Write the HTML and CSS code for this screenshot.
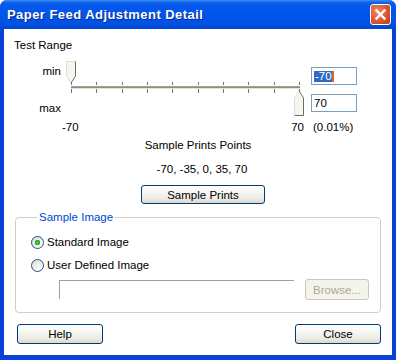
FILE: index.html
```html
<!DOCTYPE html>
<html>
<head>
  <title>Paper Feed Adjustment Detail</title>
  <link rel="stylesheet" href="styles.css">
</head>
<body>
  <div class="window">
    <div class="titlebar">
      <span class="title">Paper Feed Adjustment Detail</span>
      <span class="close-x">
        <svg width="19" height="19" viewBox="0 0 19 19">
          <path d="M5.5 5.5L13.5 13.5M13.5 5.5L5.5 13.5" stroke="#fff" stroke-width="2.4" stroke-linecap="square"/>
        </svg>
      </span>
    </div>

    <div class="content">
      <div class="section-label">Test Range</div>

      <div class="range">
        <div class="range-labels">
          <span class="lbl-min">min</span>
          <span class="lbl-max">max</span>
        </div>

        <div class="slider">
          <div class="ticks">
            <span></span><span></span><span></span><span></span><span></span>
            <span></span><span></span><span></span><span></span><span></span>
          </div>
          <div class="track"></div>
          <div class="ticks ticks-bottom">
            <span></span><span></span><span></span><span></span><span></span>
            <span></span><span></span><span></span><span></span><span></span>
          </div>
          <div class="slider-values"><span>-70</span><span>70</span></div>

          <!-- thumbs sit on top of the track -->
          <svg class="thumb thumb-min" width="11" height="23" viewBox="0 0 11 23">
            <polygon points="1,1 9,1 9,15 5,21 1,15" fill="#f6f5ef"/>
            <polyline points="5,21.5 0.5,15 0.5,0.5 9.5,0.5" fill="none" stroke="#dfdccf"/>
            <polyline points="9.5,0.5 9.5,15 5,22" fill="none" stroke="#6f6d62"/>
          </svg>
          <svg class="thumb thumb-max" width="11" height="27" viewBox="0 0 11 27">
            <polygon points="5,1 9,8 9,25 1,25 1,8" fill="#f6f5ef"/>
            <polyline points="0.5,25 0.5,8 5,0.5" fill="none" stroke="#dfdccf"/>
            <polyline points="5,0.5 9.5,8 9.5,25.5 0.5,25.5" fill="none" stroke="#6f6d62"/>
          </svg>
        </div>

        <div class="range-inputs">
          <div class="field"><span class="selected">-70</span><span class="caret"></span></div>
          <div class="field field-max">70</div>
          <div class="unit">(0.01%)</div>
        </div>
      </div>

      <div class="points">
        <div class="points-title">Sample Prints Points</div>
        <div class="points-values">-70, -35, 0, 35, 70</div>
        <button class="btn btn-sample">Sample Prints</button>
      </div>

      <fieldset class="group">
        <legend>Sample Image</legend>
        <div class="radio-row"><span class="radio checked"></span>Standard Image</div>
        <div class="radio-row radio-row-2"><span class="radio"></span>User Defined Image</div>
        <div class="file-row">
          <div class="file-path"></div>
          <button class="btn btn-disabled">Browse...</button>
        </div>
      </fieldset>

      <div class="footer">
        <button class="btn">Help</button>
        <button class="btn">Close</button>
      </div>
    </div>
  </div>
</body>
</html>
```

FILE: styles.css
```css
body {
  margin: 0;
  background: #fff;
  font-family: "Liberation Sans", Arial, sans-serif;
  font-size: 11.5px;
  color: #000;
}

.window {
  width: 396px;
  height: 360px;
  box-sizing: border-box;
  background: #0842d6;
  border-radius: 7px 7px 0 0;
  padding: 0 4px 5px 4px;
  display: flex;
  flex-direction: column;
}

.titlebar {
  height: 29px;
  margin: 0 -4px;
  padding: 0 5px 0 7px;
  border-radius: 7px 7px 0 0;
  background: linear-gradient(#3d8cf7 0, #0a5ee8 3px, #0558ee 6px, #0055ea 50%, #0052e3 80%, #0146cf 100%);
  display: flex;
  align-items: center;
  justify-content: space-between;
}

.title {
  color: #fff;
  font-weight: bold;
  font-size: 13px;
  letter-spacing: 0.45px;
  text-shadow: 1px 1px #0c2a8f;
}

.close-x {
  width: 19px;
  height: 19px;
  border: 1px solid #fff;
  border-radius: 3px;
  background: radial-gradient(circle at 35% 35%, #ef8a68, #d9522f 60%, #c23b1a);
  display: flex;
}

.content {
  flex: 1;
  background: #fff;
  padding: 9px 10px 0 10px;
}

.section-label {
  line-height: 14px;
}

/* slider block */
.range {
  margin-top: 10px;
  height: 72px;
  display: flex;
}

.range-labels {
  width: 47px;
  padding-right: 1px;
  display: flex;
  flex-direction: column;
  align-items: flex-end;
  line-height: 14px;
}

.lbl-min {
  margin-top: 2px;
}

.lbl-max {
  margin-top: 23px;
}

.slider {
  position: relative;
  width: 244px;
  padding-top: 20px;
  box-sizing: border-box;
}

.ticks {
  margin: 0 6px 0 9px;
  height: 3px;
  display: flex;
  justify-content: space-between;
}

.ticks span {
  width: 1px;
  background: #76746a;
}

.ticks-bottom {
  height: 4px;
}

.track {
  margin: 1px 6px 0 9px;
  height: 3px;
  background: linear-gradient(#a6a497 0, #a6a497 1px, #8e8c80 1px, #8e8c80 2px, #e6e4d8 2px);
}

.slider-values {
  margin-top: 27px;
  padding-right: 2px;
  display: flex;
  justify-content: space-between;
  line-height: 14px;
}

.thumb {
  position: absolute;
}

.thumb-min {
  left: 4px;
  top: -1px;
}

.thumb-max {
  left: 232px;
  top: 28px;
}

.range-inputs {
  width: 46px;
  margin-left: 5px;
  display: flex;
  flex-direction: column;
}

.field {
  margin-top: 5px;
  height: 18px;
  box-sizing: border-box;
  border: 1px solid #7f9db9;
  padding-left: 2px;
  display: flex;
  align-items: center;
  line-height: 14px;
}

.field-max {
  margin-top: 9px;
}

.selected {
  background: #316ac5;
  color: #fff;
  line-height: 11px;
  height: 11px;
  padding-left: 1px;
}

.caret {
  width: 2px;
  height: 11px;
  background: #d8652a;
}

.unit {
  margin-top: 8px;
  padding-left: 2px;
  line-height: 14px;
  white-space: nowrap;
}

/* sample points */
.points {
  margin-top: 4px;
  display: flex;
  flex-direction: column;
  align-items: center;
  line-height: 14px;
}

.points-values {
  margin-top: 10px;
  padding-left: 8px;
}

.btn {
  font-family: "Liberation Sans", Arial, sans-serif;
  font-size: 11.5px;
  color: #000;
  height: 20px;
  padding: 0;
  border: 1px solid #003c74;
  border-radius: 3px;
  background: linear-gradient(#ffffff 0, #f6f6f2 40%, #ecebe4 75%, #dcd8cc 100%);
}

.btn-sample {
  margin-top: 9px;
  margin-left: 10px;
  width: 124px;
  height: 19px;
}

/* group box */
.group {
  margin: 6px 0 0 1px;
  width: 366px;
  height: 103px;
  box-sizing: border-box;
  border: 1px solid #d0d0bf;
  border-radius: 4px;
  padding: 10px 0 0 15px;
}

.group legend {
  color: #0046d5;
  padding: 0 2px;
  margin-left: 6px;
  line-height: 14px;
}

.radio-row {
  height: 16px;
  display: flex;
  align-items: center;
  gap: 3px;
}

.radio-row-2 {
  margin-top: 7px;
}

.radio {
  width: 13px;
  height: 13px;
  box-sizing: border-box;
  border: 1px solid #1c5180;
  border-radius: 50%;
  background: linear-gradient(135deg, #dcdcd6, #f4f4f0 60%, #fff);
}

.radio.checked {
  background: radial-gradient(circle, #55d955 0, #21a121 2.5px, transparent 3px),
    linear-gradient(135deg, #dcdcd6, #f4f4f0 60%, #fff);
}

.file-row {
  margin-top: 6px;
  display: flex;
  align-items: center;
}

.file-path {
  margin-left: 28px;
  width: 235px;
  height: 19px;
  box-sizing: border-box;
  border-top: 1px solid #a0a0a0;
  border-left: 1px solid #a0a0a0;
}

.btn-disabled {
  margin-left: 11px;
  width: 64px;
  height: 21px;
  border-color: #cac8bb;
  background: #f5f4ea;
  color: #aca899;
}

.footer {
  margin-top: 11px;
  padding: 0 1px 0 3px;
  display: flex;
  justify-content: space-between;
}

.footer .btn {
  width: 86px;
}
```
